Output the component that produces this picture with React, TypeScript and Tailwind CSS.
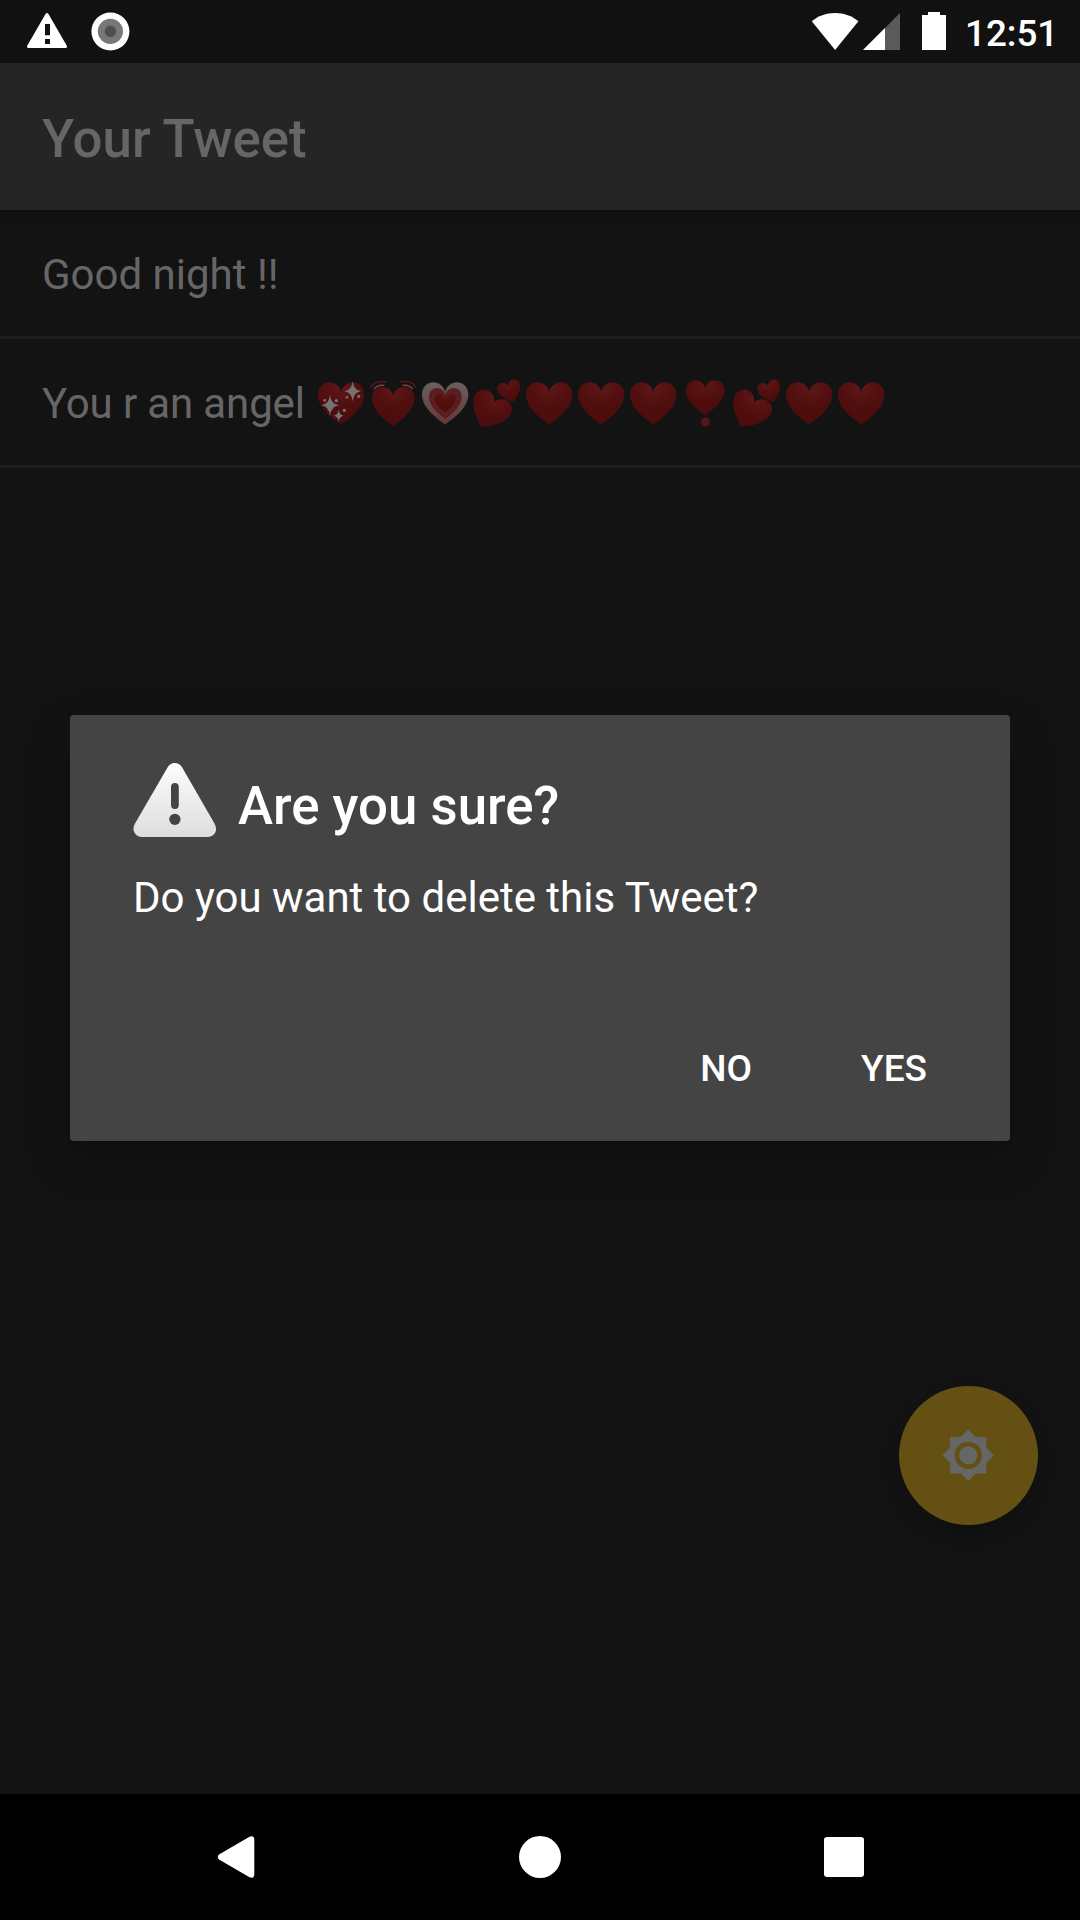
import React from "react";

const HEART =
  "M69.5 127C51 112 0 79 0 37C0 15 15 0 34 0C51 0 65 12 69.5 28C74 12 88 0 105 0C124 0 139 15 139 37C139 79 88 112 69.5 127Z";

type HeartKind = "sparkle" | "beat" | "grow" | "two" | "plain" | "exclaim";

const HEARTS: { kind: HeartKind; label: string }[] = [
  { kind: "sparkle", label: "💖" },
  { kind: "beat", label: "💓" },
  { kind: "grow", label: "💗" },
  { kind: "two", label: "💕" },
  { kind: "plain", label: "❤" },
  { kind: "plain", label: "❤" },
  { kind: "plain", label: "❤" },
  { kind: "exclaim", label: "❣" },
  { kind: "two", label: "💕" },
  { kind: "plain", label: "❤" },
  { kind: "plain", label: "❤" },
];

function Shape({ transform, fill = "url(#heartRed)" }: { transform: string; fill?: string }) {
  return <path d={HEART} transform={transform} fill={fill} />;
}

function Star({ x, y, rx, ry }: { x: number; y: number; rx: number; ry: number }) {
  return (
    <path
      transform={`translate(${x} ${y}) scale(${rx} ${ry})`}
      d="M0-1Q.1-.1 1 0Q.1.1 0 1Q-.1.1-1 0Q-.1-.1 0-1Z"
      fill="#757272"
    />
  );
}

function Heart({ kind, label }: { kind: HeartKind; label: string }) {
  return (
    <svg role="img" aria-label={label} viewBox="0 0 156 156" className="size-[52px] shrink-0">
      {kind === "plain" && <Shape transform="translate(9 16)" />}
      {kind === "sparkle" && (
        <>
          <Shape transform="translate(9 16)" />
          <Star x={45} y={85} rx={27} ry={32} />
          <Star x={113} y={43} rx={25} ry={30} />
          <Star x={71} y={116} rx={15} ry={19} />
          <g fill="#757272">
            <circle cx="29" cy="70" r="4" />
            <circle cx="64" cy="71" r="5" />
            <circle cx="96" cy="61" r="4" />
            <circle cx="131" cy="58" r="5" />
            <circle cx="88" cy="100" r="5" />
          </g>
        </>
      )}
      {kind === "beat" && (
        <>
          <Shape transform="translate(15 29) scale(.918 .94)" />
          <g fill="none" strokeLinecap="round" strokeWidth="4.5">
            <path d="M12 31Q25 8 56 15M102 15Q133 8 146 31" stroke="#5d1515" />
            <path d="M22 35Q32 22 50 25M108 25Q126 22 136 35" stroke="#6e4a4a" />
          </g>
        </>
      )}
      {kind === "grow" && (
        <>
          <Shape transform="translate(9 16)" fill="url(#heartPink)" />
          <Shape transform="translate(30 33) scale(.705 .73)" fill="#5b1d1d" />
          <Shape transform="translate(48 51) scale(.44 .433)" />
        </>
      )}
      {kind === "two" && (
        <>
          <Shape transform="translate(30 150) rotate(28) scale(.87 .84) translate(-69.5 -127)" />
          <Shape transform="translate(127 75) rotate(-18) scale(.5 .51) translate(-69.5 -127)" />
        </>
      )}
      {kind === "exclaim" && (
        <>
          <Shape transform="translate(21 10) scale(.83)" />
          <circle cx="79" cy="135" r="13.5" fill="#5a1414" />
        </>
      )}
    </svg>
  );
}

function StatusBar() {
  return (
    <header className="flex h-[63px] shrink-0 items-center bg-[#111111] pr-[24px] pl-[27px]">
      <svg viewBox="27 0 40 63" className="h-[63px] w-[40px]">
        <path d="M47 14.5L65.5 46.5H28.5Z" fill="#fff" stroke="#fff" strokeWidth="3" strokeLinejoin="round" />
        <path d="M45 24h5v11.3h-5zM45 39h5v5h-5z" fill="#111111" />
      </svg>
      <svg viewBox="91 0 39 63" className="ml-[24px] h-[63px] w-[39px]">
        <circle cx="110.4" cy="31.5" r="19" fill="#fff" />
        <circle cx="110.4" cy="31.3" r="12.6" fill="#777777" />
        <circle cx="110.4" cy="31.3" r="5.7" fill="#4e4e4e" />
      </svg>
      <div className="ml-auto flex items-center">
        <svg viewBox="811 0 136 63" className="h-[63px] w-[136px]" fill="#fff">
          <path d="M835.1 50L811.8 21.3C818 16 826 13 835.1 13S852 16 858.4 21.3Z" />
          <path d="M863 50L900 13V50Z" fill="#5a5a5a" />
          <path d="M863 50L885 28V50Z" />
          <path d="M922 15h6v-3h12v3h6v35h-24z" />
        </svg>
        <span className="ml-[18px] w-[91px] pt-[4px] text-[36.75px] leading-[63px] font-medium whitespace-nowrap text-white">12:51</span>
      </div>
    </header>
  );
}

function DialogIcon() {
  return (
    <svg viewBox="133 762 84 77" className="h-[77px] w-[84px]">
      <defs>
        <linearGradient id="warn" x1="0" y1="0" x2="0" y2="1">
          <stop offset="0" stopColor="#fdfdfd" />
          <stop offset="1" stopColor="#dddddd" />
        </linearGradient>
      </defs>
      <path
        d="M167.5 767.5Q170 763 174.8 763T182.2 767.5L214.5 823.5Q217.5 829 215 833Q212.5 837 207 837H142.5Q137 837 134.7 833Q132 829 135 823.5Z"
        fill="url(#warn)"
      />
      <rect x="171" y="783" width="7.8" height="26" rx="3.9" fill="#444444" />
      <circle cx="174.9" cy="819.3" r="5.6" fill="#444444" />
    </svg>
  );
}

function Dialog() {
  return (
    <section
      role="dialog"
      className="absolute top-[715px] left-[70px] flex h-[426px] w-[940px] flex-col rounded-[4px] bg-[#444444] px-[63px] text-white shadow-[0_18px_44px_rgba(0,0,0,0.26)]"
    >
      <div className="mt-[47px] flex h-[77px] items-start">
        <DialogIcon />
        <h2 className="ml-[21px] text-[52.8px] leading-[88px] font-medium whitespace-nowrap">Are you sure?</h2>
      </div>
      <p className="mt-[34px] text-[42px] leading-[49px] whitespace-nowrap">Do you want to delete this Tweet?</p>
      <div className="mt-[84px] flex h-[126px] items-center justify-end pr-[20px] text-[37px] font-medium">
        <button className="mr-[109px]">NO</button>
        <button>YES</button>
      </div>
    </section>
  );
}

function NavBar() {
  return (
    <nav className="flex h-[126px] shrink-0 items-center bg-black pl-[217px]">
      <svg viewBox="0 0 38 42" className="h-[42px] w-[38px]" fill="#fff">
        <path d="M2 18.5L32.5.8Q37.3-1 37.3 4V38Q37.3 43 32.5 41.2L2 23.5Q-.5 21 2 18.5Z" />
      </svg>
      <span className="ml-[264px] size-[42px] rounded-full bg-white" />
      <span className="ml-[263px] size-[40px] rounded-[3px] bg-white" />
    </nav>
  );
}

export default function App() {
  return (
    <div className="relative flex h-[1920px] w-[1080px] flex-col overflow-hidden bg-[#131313] font-['Roboto',sans-serif]">
      <svg width="0" height="0" className="absolute">
        <defs>
          <radialGradient id="heartRed" cx=".5" cy=".1" r=".85">
            <stop offset="0" stopColor="#611717" />
            <stop offset=".5" stopColor="#510f0f" />
            <stop offset="1" stopColor="#4b0c0c" />
          </radialGradient>
          <linearGradient id="heartPink" x1="0" y1="0" x2="0" y2="1">
            <stop offset="0" stopColor="#686161" />
            <stop offset="1" stopColor="#633535" />
          </linearGradient>
        </defs>
      </svg>
      <StatusBar />
      <div className="z-10 flex h-[147px] shrink-0 items-center bg-[#252525] pt-[5px] pl-[42px] shadow-[0_3px_8px_rgba(0,0,0,0.3)]">
        <h1 className="text-[52.8px] leading-[62px] font-medium text-[#666666]">Your Tweet</h1>
      </div>
      <main className="flex-1 text-[42px] leading-[49px] text-[#666666]">
        <div className="flex h-[129px] items-center border-b-[3px] border-[#1d1d1d] pt-[2px] pl-[42px]">Good night !!</div>
        <div className="flex h-[129px] items-center border-b-[3px] border-[#1d1d1d] pt-[2px] pl-[42px]">
          <span className="w-[273px] tracking-[-0.13px] whitespace-nowrap">You r an angel</span>
          <span className="flex">
            {HEARTS.map((h, i) => (
              <Heart key={i} kind={h.kind} label={h.label} />
            ))}
          </span>
        </div>
      </main>
      <NavBar />
      <button className="absolute top-[1386px] left-[899px] flex size-[139px] items-center justify-center rounded-full bg-[#645012] shadow-[0_9px_18px_rgba(0,0,0,0.22)]">
        <svg viewBox="0 0 24 24" className="size-[54.5px]" fill="#666666" fillRule="evenodd">
          <path d="M20 8.69V4h-4.69L12 .69 8.69 4H4v4.69L.69 12 4 15.31V20h4.69L12 23.31 15.31 20H20v-4.69L23.31 12 20 8.69zM12 18a6 6 0 1 1 0-12 6 6 0 0 1 0 12zm0-10a4 4 0 1 0 0 8 4 4 0 0 0 0-8z" />
        </svg>
      </button>
      <Dialog />
    </div>
  );
}
